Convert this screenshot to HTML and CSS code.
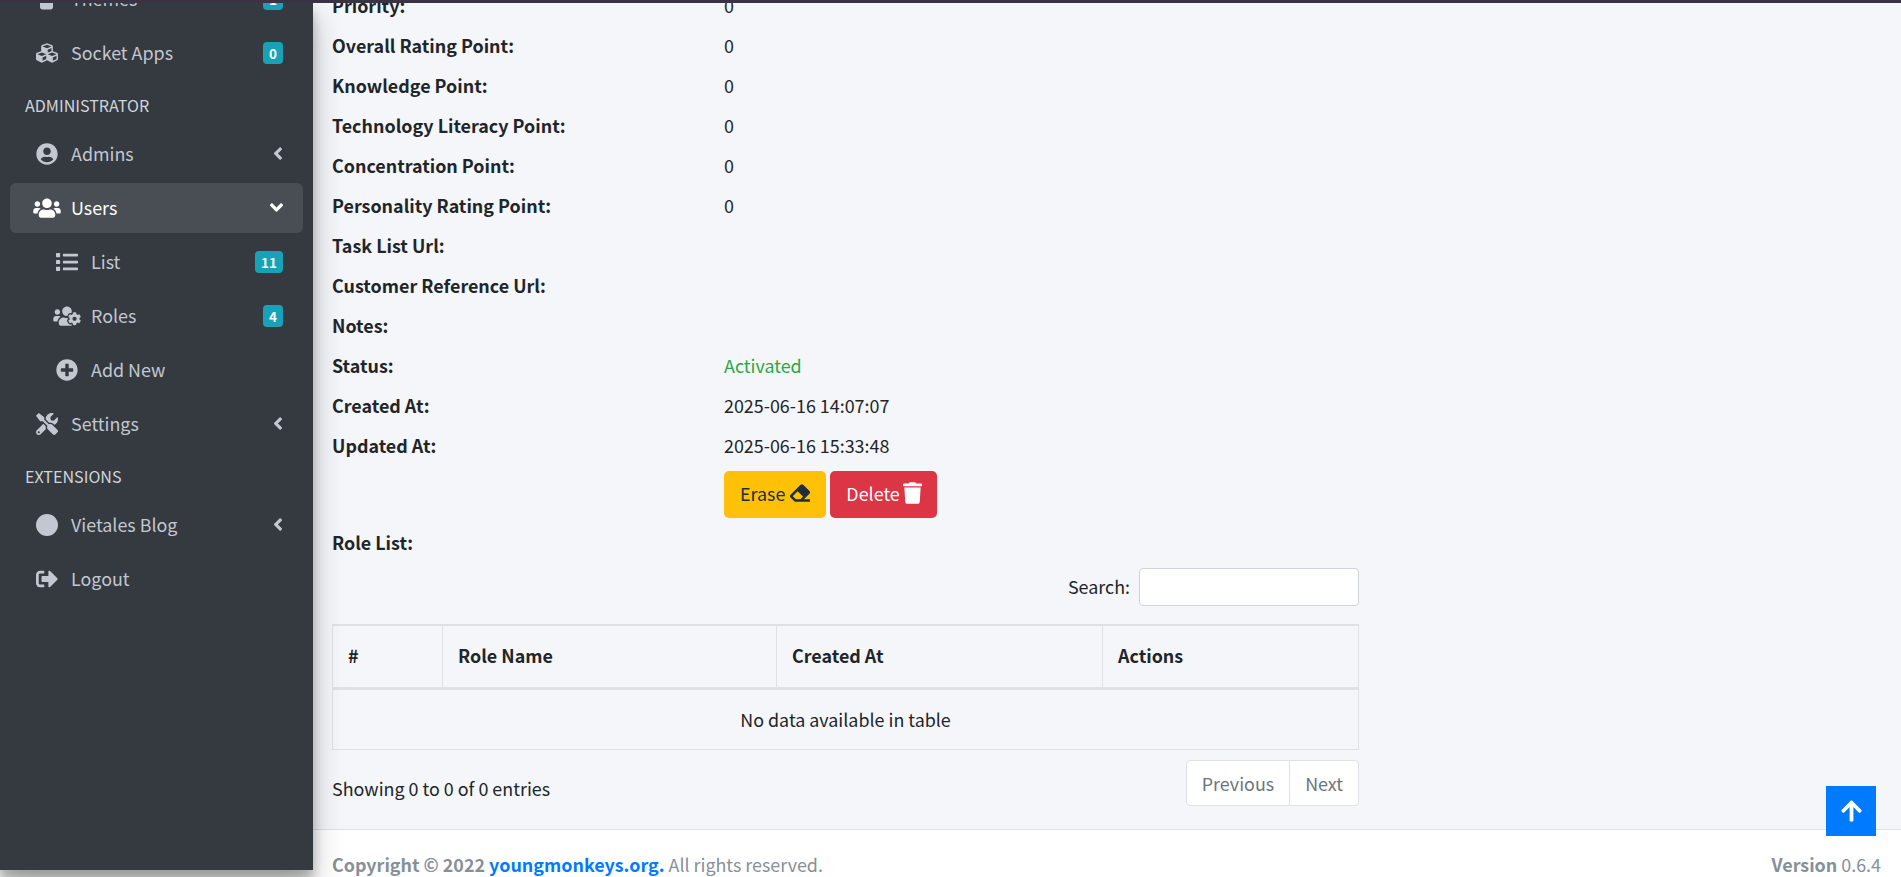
FILE: index.html
```html
<!DOCTYPE html>
<html lang="en">
<head>
    <meta charset="UTF-8">
    <meta name="viewport" content="width=device-width, initial-scale=1.0">
    <title>User Details</title>
    <link rel="stylesheet" href="styles.css">
</head>
<body>
    <div class="topline"></div>
    <div class="wrapper">
        <aside class="sidebar">
            <ul class="nav">
                <li><a class="nav-link" href="#">
                    <span class="nav-icon"><svg width="22" height="22" viewBox="0 0 22 22"><path fill="currentColor" d="M4 2h17v1.500h-4V19c0 1.500-1 2.500-2.500 2.500H6.500C5 21.500 4 20.500 4 19z"/></svg></span>
                    Themes<span class="badge">1</span></a></li>
                <li><a class="nav-link" href="#">
                    <span class="nav-icon"><svg width="22" height="22" viewBox="0 0 512 512"><path fill="currentColor" d="M488.6 250.2L392 214V105.500c0-15-9.300-28.400-23.400-33.700l-100-37.500c-8.100-3.100-17.100-3.100-25.300 0l-100 37.500c-14.100 5.300-23.400 18.700-23.400 33.700V214l-96.600 36.200C9.300 255.500 0 268.900 0 283.900V394c0 13.600 7.700 26.100 19.900 32.200l100 50c10.100 5.100 22.100 5.100 32.200 0l103.900-52 103.900 52c10.100 5.100 22.100 5.100 32.200 0l100-50c12.200-6.100 19.900-18.600 19.900-32.200V283.900c0-15-9.300-28.400-23.400-33.700zM358 214.800l-85 31.900v-68.200l85-37v73.300zM154 104.100l102-38.200 102 38.200v.6l-102 41.400-102-41.400v-.6zm84 291.100l-85 42.500v-79.100l85-38.800v75.400zm0-112l-102 41.400-102-41.400v-.6l102-38.200 102 38.200v.6zm240 112l-85 42.500v-79.100l85-38.800v75.400zm0-112l-102 41.400-102-41.400v-.6l102-38.200 102 38.200v.6z"/></svg></span>
                    Socket Apps<span class="badge">0</span></a></li>

                <li class="nav-header">ADMINISTRATOR</li>
                <li><a class="nav-link" href="#">
                    <span class="nav-icon"><svg width="22" height="22" viewBox="0 0 496 512"><path fill="currentColor" d="M248 8C111 8 0 119 0 256s111 248 248 248 248-111 248-248S385 8 248 8zm0 96c48.600 0 88 39.400 88 88s-39.400 88-88 88-88-39.400-88-88 39.400-88 88-88zm0 344c-58.700 0-111.300-26.600-146.500-68.200 18.800-35.400 55.600-59.800 98.500-59.800 2.400 0 4.800.4 7.100 1.100 13 4.200 26.600 6.900 40.900 6.900 14.300 0 28-2.700 40.900-6.900 2.300-.7 4.700-1.100 7.100-1.100 42.900 0 79.700 24.400 98.500 59.800C359.300 421.400 306.700 448 248 448z"/></svg></span>
                    Admins
                    <svg class="chevron" width="10" height="21" viewBox="0 0 256 512"><path fill="currentColor" d="M31.700 239l136-136c9.400-9.400 24.600-9.400 33.900 0l22.600 22.600c9.400 9.400 9.400 24.600 0 33.900L127.900 256l96.400 96.400c9.400 9.400 9.400 24.600 0 33.900L201.700 409c-9.400 9.400-24.600 9.400-33.900 0l-136-136c-9.500-9.400-9.500-24.600-.1-34z"/></svg></a></li>
                <li>
                    <a class="nav-link active" href="#">
                        <span class="nav-icon"><svg width="28" height="22" viewBox="0 0 640 512"><path fill="currentColor" d="M96 224c35.300 0 64-28.700 64-64s-28.700-64-64-64-64 28.700-64 64 28.700 64 64 64zm448 0c35.300 0 64-28.700 64-64s-28.700-64-64-64-64 28.700-64 64 28.700 64 64 64zm32 32h-64c-17.600 0-33.500 7.100-45.100 18.600 40.300 22.100 68.900 62 75.100 109.400h66c17.700 0 32-14.300 32-32v-32c0-35.300-28.700-64-64-64zm-256 0c61.900 0 112-50.100 112-112S381.900 32 320 32 208 82.100 208 144s50.100 112 112 112zm76.800 32h-8.300c-20.800 10-43.900 16-68.500 16s-47.600-6-68.500-16h-8.300C179.600 288 128 339.600 128 403.200V432c0 26.500 21.500 48 48 48h288c26.500 0 48-21.500 48-48v-28.800c0-63.600-51.600-115.200-115.200-115.200zm-223.700-13.400C161.500 263.100 145.600 256 128 256H64c-35.300 0-64 28.700-64 64v32c0 17.700 14.300 32 32 32h65.900c6.300-47.400 34.900-87.300 75.200-109.400z"/></svg></span>
                        Users
                        <svg class="chevron" width="13" height="21" viewBox="0 0 320 512"><path fill="currentColor" d="M143 352.300L7 216.300c-9.400-9.400-9.400-24.600 0-33.900l22.600-22.600c9.400-9.400 24.600-9.400 33.900 0l96.400 96.400 96.400-96.400c9.400-9.400 24.600-9.400 33.900 0l22.600 22.600c9.400 9.400 9.400 24.600 0 33.900l-136 136c-9.200 9.400-24.400 9.400-33.800 0z"/></svg></a>
                    <ul class="nav-sub">
                        <li><a class="nav-link" href="#">
                            <span class="nav-icon"><svg width="22" height="22" viewBox="0 0 512 512"><path fill="currentColor" d="M80 368H16a16 16 0 0 0-16 16v64a16 16 0 0 0 16 16h64a16 16 0 0 0 16-16v-64a16 16 0 0 0-16-16zm0-320H16A16 16 0 0 0 0 64v64a16 16 0 0 0 16 16h64a16 16 0 0 0 16-16V64a16 16 0 0 0-16-16zm0 160H16a16 16 0 0 0-16 16v64a16 16 0 0 0 16 16h64a16 16 0 0 0 16-16v-64a16 16 0 0 0-16-16zm416 176H176a16 16 0 0 0-16 16v32a16 16 0 0 0 16 16h320a16 16 0 0 0 16-16v-32a16 16 0 0 0-16-16zm0-320H176a16 16 0 0 0-16 16v32a16 16 0 0 0 16 16h320a16 16 0 0 0 16-16V80a16 16 0 0 0-16-16zm0 160H176a16 16 0 0 0-16 16v32a16 16 0 0 0 16 16h320a16 16 0 0 0 16-16v-32a16 16 0 0 0-16-16z"/></svg></span>
                            List<span class="badge">11</span></a></li>
                        <li><a class="nav-link" href="#">
                            <span class="nav-icon"><svg width="28" height="22" viewBox="0 0 640 512"><path fill="currentColor" d="M610.500 341.300c2.600-14.100 2.600-28.500 0-42.600l25.800-14.900c3-1.700 4.300-5.200 3.300-8.500-6.700-21.500-18.200-41-33.200-57.400-2.300-2.500-6-3.100-9-1.400l-25.800 14.900c-10.900-9.300-23.400-16.500-36.900-21.300v-29.800c0-3.400-2.400-6.400-5.700-7.100-22.300-5-45-4.800-66.200 0-3.300.7-5.700 3.700-5.700 7.100v29.800c-13.500 4.800-26 12-36.900 21.300l-25.800-14.900c-2.900-1.700-6.700-1.100-9 1.400-15 16.400-26.500 35.900-33.200 57.400-1 3.300.4 6.800 3.300 8.500l25.800 14.900c-2.600 14.100-2.600 28.500 0 42.600l-25.800 14.900c-3 1.700-4.300 5.200-3.300 8.500 6.700 21.500 18.200 41 33.200 57.400 2.300 2.500 6 3.100 9 1.400l25.800-14.900c10.900 9.300 23.400 16.500 36.900 21.300v29.800c0 3.400 2.400 6.400 5.700 7.100 22.300 5 45 4.800 66.200 0 3.300-.7 5.700-3.700 5.700-7.100v-29.800c13.500-4.800 26-12 36.900-21.300l25.800 14.900c2.900 1.700 6.700 1.100 9-1.400 15-16.400 26.500-35.900 33.200-57.400 1-3.300-.4-6.800-3.300-8.500l-25.800-14.900zM496 368.500c-26.800 0-48.500-21.800-48.500-48.500s21.800-48.500 48.500-48.500 48.500 21.800 48.500 48.500-21.700 48.500-48.500 48.500zM96 224c35.300 0 64-28.700 64-64s-28.700-64-64-64-64 28.700-64 64 28.700 64 64 64zm224 32c1.900 0 3.700-.5 5.600-.6 8.300-21.700 20.500-42.100 36.300-59.200 7.400-8 17.900-12.600 28.900-12.600 6.900 0 13.700 1.800 19.600 5.300l7.900 4.600c.8-.5 1.600-.9 2.400-1.400 7-14.600 11.200-30.800 11.200-48 0-61.900-50.100-112-112-112S208 82.100 208 144c0 61.900 50.100 112 112 112zm105.200 194.500c-2.300-1.200-4.600-2.600-6.800-3.900-8.200 4.800-15.300 9.800-27.500 9.800-10.900 0-21.400-4.600-28.900-12.600-18.300-19.800-32.300-43.900-40.200-69.600-10.700-34.500 24.900-49.700 25.800-50.300-.1-2.600-.1-5.200 0-7.800l-7.900-4.600c-3.800-2.200-7-5-9.800-8.100-3.300.2-6.500.6-9.800.6-24.600 0-47.600-6-68.500-16h-8.300C179.600 288 128 339.600 128 403.200V432c0 26.500 21.500 48 48 48h255.400c-3.700-6-6.200-12.800-6.200-20.300v-9.200zM173.100 274.600C161.500 263.100 145.600 256 128 256H64c-35.300 0-64 28.700-64 64v32c0 17.700 14.300 32 32 32h65.900c6.300-47.400 34.900-87.300 75.200-109.400z"/></svg></span>
                            Roles<span class="badge">4</span></a></li>
                        <li><a class="nav-link" href="#">
                            <span class="nav-icon"><svg width="22" height="22" viewBox="0 0 512 512"><path fill="currentColor" d="M256 8C119 8 8 119 8 256s111 248 248 248 248-111 248-248S393 8 256 8zm144 276c0 6.600-5.400 12-12 12h-92v92c0 6.600-5.400 12-12 12h-56c-6.600 0-12-5.400-12-12v-92h-92c-6.600 0-12-5.400-12-12v-56c0-6.600 5.400-12 12-12h92v-92c0-6.600 5.400-12 12-12h56c6.600 0 12 5.400 12 12v92h92c6.600 0 12 5.400 12 12v56z"/></svg></span>
                            Add New</a></li>
                    </ul>
                </li>
                <li><a class="nav-link" href="#">
                    <span class="nav-icon"><svg width="22" height="22" viewBox="0 0 512 512"><path fill="currentColor" d="M501.100 395.700L384 278.600c-23.100-23.100-57.600-27.600-85.400-13.900L192 158.100V96L64 0 0 64l96 128h62.100l106.600 106.600c-13.600 27.800-9.200 62.300 13.900 85.400l117.100 117.100c14.600 14.600 38.200 14.600 52.700 0l52.700-52.700c14.500-14.600 14.500-38.200 0-52.700zM331.700 225c28.300 0 54.900 11 74.900 31l19.400 19.400c15.800-6.900 30.800-16.500 43.800-29.500 37.100-37.100 49.700-89.300 37.900-136.700-2.200-9-13.500-12.100-20.100-5.500l-74.400 74.400-67.900-11.300L334 98.900l74.400-74.400c6.600-6.600 3.400-17.900-5.700-20.200-47.400-11.700-99.600.9-136.600 37.900-28.500 28.500-41.900 66.100-41.200 103.600l82.100 82.100c8.100-1.900 16.500-2.900 24.700-2.900zm-103.900 82l-56.700-56.700L18.700 402.800c-25 25-25 65.500 0 90.500s65.500 25 90.500 0l123.600-123.600c-7.600-19.900-9.900-41.600-5-62.700zM64 472c-13.200 0-24-10.800-24-24 0-13.300 10.700-24 24-24s24 10.700 24 24c0 13.200-10.700 24-24 24z"/></svg></span>
                    Settings
                    <svg class="chevron" width="10" height="21" viewBox="0 0 256 512"><path fill="currentColor" d="M31.700 239l136-136c9.400-9.400 24.600-9.400 33.900 0l22.600 22.600c9.400 9.400 9.400 24.600 0 33.900L127.900 256l96.400 96.400c9.400 9.400 9.400 24.600 0 33.900L201.700 409c-9.400 9.400-24.600 9.400-33.900 0l-136-136c-9.500-9.400-9.500-24.600-.1-34z"/></svg></a></li>

                <li class="nav-header">EXTENSIONS</li>
                <li><a class="nav-link" href="#">
                    <span class="nav-icon"><svg width="22" height="22" viewBox="0 0 22 22"><circle fill="currentColor" cx="11" cy="11" r="11"/></svg></span>
                    Vietales Blog
                    <svg class="chevron" width="10" height="21" viewBox="0 0 256 512"><path fill="currentColor" d="M31.700 239l136-136c9.400-9.400 24.600-9.400 33.900 0l22.600 22.600c9.400 9.400 9.400 24.600 0 33.900L127.900 256l96.400 96.400c9.400 9.400 9.400 24.600 0 33.900L201.700 409c-9.400 9.400-24.600 9.400-33.900 0l-136-136c-9.500-9.400-9.500-24.600-.1-34z"/></svg></a></li>
                <li><a class="nav-link" href="#">
                    <span class="nav-icon"><svg width="22" height="22" viewBox="0 0 512 512"><path fill="currentColor" d="M497 273L329 441c-15 15-41 4.500-41-17v-96H152c-13.300 0-24-10.700-24-24v-96c0-13.300 10.700-24 24-24h136V88c0-21.400 25.900-32 41-17l168 168c9.300 9.400 9.300 24.600 0 34zM192 436v-40c0-6.600-5.400-12-12-12H96c-17.700 0-32-14.300-32-32V160c0-17.700 14.300-32 32-32h84c6.600 0 12-5.400 12-12V76c0-6.600-5.400-12-12-12H96c-53 0-96 43-96 96v192c0 53 43 96 96 96h84c6.600 0 12-5.400 12-12z"/></svg></span>
                    Logout</a></li>
            </ul>
        </aside>

        <div class="main">
            <section class="content">
                <div class="info-row"><span class="info-label">Priority:</span><span>0</span></div>
                <div class="info-row"><span class="info-label">Overall Rating Point:</span><span>0</span></div>
                <div class="info-row"><span class="info-label">Knowledge Point:</span><span>0</span></div>
                <div class="info-row"><span class="info-label">Technology Literacy Point:</span><span>0</span></div>
                <div class="info-row"><span class="info-label">Concentration Point:</span><span>0</span></div>
                <div class="info-row"><span class="info-label">Personality Rating Point:</span><span>0</span></div>
                <div class="info-row"><span class="info-label">Task List Url:</span></div>
                <div class="info-row"><span class="info-label">Customer Reference Url:</span></div>
                <div class="info-row"><span class="info-label">Notes:</span></div>
                <div class="info-row"><span class="info-label">Status:</span><span class="text-success">Activated</span></div>
                <div class="info-row"><span class="info-label">Created At:</span><span>2025-06-16 14:07:07</span></div>
                <div class="info-row"><span class="info-label">Updated At:</span><span>2025-06-16 15:33:48</span></div>

                <div class="actions">
                    <button class="btn btn-warning">Erase <svg width="20" height="20" viewBox="0 0 512 512"><path fill="currentColor" d="M497.941 273.941c18.745-18.745 18.745-49.137 0-67.882l-160-160c-18.745-18.745-49.136-18.746-67.883 0l-256 256c-18.745 18.745-18.745 49.137 0 67.882l96 96A48.004 48.004 0 0 0 144 480h356c6.627 0 12-5.373 12-12v-40c0-6.627-5.373-12-12-12H355.883l142.058-142.059zm-302.627-62.627l137.373 137.373L265.373 416H150.628l-80-80 124.686-124.686z"/></svg></button>
                    <button class="btn btn-danger">Delete <svg width="19" height="22" viewBox="0 0 448 512"><path fill="currentColor" d="M432 32H312l-9.400-18.700A24 24 0 0 0 281.100 0H166.800a23.720 23.720 0 0 0-21.400 13.300L136 32H16A16 16 0 0 0 0 48v32a16 16 0 0 0 16 16h416a16 16 0 0 0 16-16V48a16 16 0 0 0-16-16zM53.200 467a48 48 0 0 0 47.900 45h245.800a48 48 0 0 0 47.900-45L416 128H32z"/></svg></button>
                </div>

                <div class="info-row role-title"><span class="info-label">Role List:</span></div>

                <div class="table-search">
                    <label for="role-search">Search:</label>
                    <input id="role-search" type="search">
                </div>

                <table class="role-table">
                    <thead>
                        <tr>
                            <th class="col-id">#</th>
                            <th class="col-name">Role Name</th>
                            <th class="col-date">Created At</th>
                            <th>Actions</th>
                        </tr>
                    </thead>
                    <tbody>
                        <tr><td colspan="4">No data available in table</td></tr>
                    </tbody>
                </table>

                <div class="table-footer">
                    <div class="table-info">Showing 0 to 0 of 0 entries</div>
                    <div class="pagination">
                        <a href="#">Previous</a>
                        <a href="#">Next</a>
                    </div>
                </div>
            </section>

            <footer class="footer">
                <div><strong>Copyright &copy; 2022 <a href="#">youngmonkeys.org.</a></strong> All rights reserved.</div>
                <div><strong>Version</strong> 0.6.4</div>
            </footer>
        </div>
    </div>

    <a class="back-top" href="#"><svg width="21" height="24" viewBox="0 0 448 512"><path fill="currentColor" d="M34.900 289.500l-22.200-22.200c-9.400-9.400-9.400-24.600 0-33.900L207 39c9.400-9.400 24.600-9.400 33.900 0l194.300 194.300c9.400 9.400 9.400 24.600 0 33.900L413 289.400c-9.500 9.500-25 9.300-34.300-.4L264 168.600V456c0 13.300-10.700 24-24 24h-32c-13.300 0-24-10.700-24-24V168.600L69.200 289.100c-9.300 9.800-24.800 10-34.300.4z"/></svg></a>
</body>
</html>
```

FILE: styles.css
```css
* {
    box-sizing: border-box;
}

html, body {
    height: 100%;
}

body {
    margin: 0;
    overflow: hidden;
    font-family: "Noto Sans CJK SC", "Noto Sans", sans-serif;
    font-size: 17.900px;
    line-height: 24px;
    color: #212529;
    background-color: #ffffff;
}

a {
    text-decoration: none;
}

ul {
    list-style: none;
    margin: 0;
    padding: 0;
}

.topline {
    height: 3px;
    background-color: #3a3245;
}

.wrapper {
    display: flex;
    align-items: flex-start;
    height: 874px;
    overflow: hidden;
}

/* sidebar */
.sidebar {
    position: relative;
    z-index: 10;
    flex: 0 0 313px;
    height: 867px;
    padding: 0 10px;
    overflow: hidden;
    background-color: #343a40;
    box-shadow: 0 14px 28px rgba(0, 0, 0, 0.25), 0 10px 10px rgba(0, 0, 0, 0.22);
}

.nav {
    margin-top: -29px;
}

.nav-link {
    display: flex;
    align-items: center;
    height: 50px;
    margin-bottom: 4px;
    padding: 0 20px 2px 22px;
    border-radius: 6px;
    color: #c2c7d0;
}

.nav-link.active {
    color: #ffffff;
    background-color: rgba(255, 255, 255, 0.1);
}

.nav-sub .nav-link {
    padding-left: 42px;
}

.nav-icon {
    display: flex;
    justify-content: center;
    flex: 0 0 30px;
    margin: 2px 9px 0 0;
}

.nav-header {
    height: 47px;
    padding: 11px 15px 0;
    font-size: 16.100px;
    color: #d0d4db;
}

.chevron {
    margin-left: auto;
}

.badge {
    margin: 2px 0 0 auto;
    padding: 0 6px;
    height: 22px;
    border-radius: 4px;
    font-size: 13.500px;
    font-weight: 700;
    line-height: 22px;
    color: #ffffff;
    background-color: #17a2b8;
}

/* main column */
.main {
    flex: 1;
    min-width: 0;
    background-color: #f4f6f9;
}

.content {
    width: 1046px;
    margin-top: -17px;
    padding: 0 0 23px 19px;
}

.info-row {
    display: flex;
    height: 40px;
    align-items: center;
    padding-bottom: 2px;
}

.info-label {
    flex: 0 0 392px;
    font-weight: 700;
}

.text-success {
    color: #28a745;
}

.actions {
    display: flex;
    gap: 4px;
    margin: 5px 0 5px 392px;
}

.btn {
    display: flex;
    align-items: center;
    gap: 3px;
    height: 47px;
    padding: 0 16px 3px;
    border: none;
    border-radius: 5px;
    font-family: inherit;
    font-size: 17.900px;
}

.btn-warning {
    gap: 5px;
    color: #1f2d3d;
    background-color: #ffc107;
}

.btn-danger {
    padding-right: 15px;
    color: #ffffff;
    background-color: #dc3545;
}

.table-search {
    display: flex;
    justify-content: flex-end;
    align-items: center;
    gap: 9px;
    margin: 5px 0 18px;
}

.table-search label {
    margin-bottom: 2px;
}

.table-search input {
    width: 220px;
    height: 38px;
    border: 1px solid #ced4da;
    border-radius: 4px;
    background-color: #ffffff;
}

.role-table {
    width: 1027px;
    table-layout: fixed;
    border-collapse: collapse;
    border: 1px solid #dee2e6;
}

.role-table th {
    height: 63px;
    padding: 0 15px 2px;
    border: 1px solid #dee2e6;
    border-top-width: 2px;
    border-bottom-width: 3px;
    text-align: left;
}

.role-table td {
    height: 61px;
    padding-bottom: 1px;
    text-align: center;
}

.col-id {
    width: 110px;
}

.col-name {
    width: 334px;
}

.col-date {
    width: 326px;
}

.table-footer {
    display: flex;
    justify-content: space-between;
    margin-top: 10px;
}

.table-info {
    margin-top: 16px;
}

.pagination {
    display: flex;
    height: 46px;
    border: 1px solid #dee2e6;
    border-radius: 4px;
    background-color: #ffffff;
}

.pagination a {
    padding: 0 15px;
    line-height: 44px;
    color: #6c757d;
}

.pagination a + a {
    border-left: 1px solid #dee2e6;
}

.footer {
    display: flex;
    justify-content: space-between;
    height: 60px;
    padding: 22px 20px 0 19px;
    border-top: 1px solid #dee2e6;
    color: #869099;
    background-color: #ffffff;
}

.footer a {
    color: #007bff;
}

.back-top {
    position: fixed;
    right: 25px;
    bottom: 41px;
    z-index: 20;
    display: flex;
    align-items: center;
    justify-content: center;
    width: 50px;
    height: 50px;
    color: #ffffff;
    background-color: #007bff;
}
```
